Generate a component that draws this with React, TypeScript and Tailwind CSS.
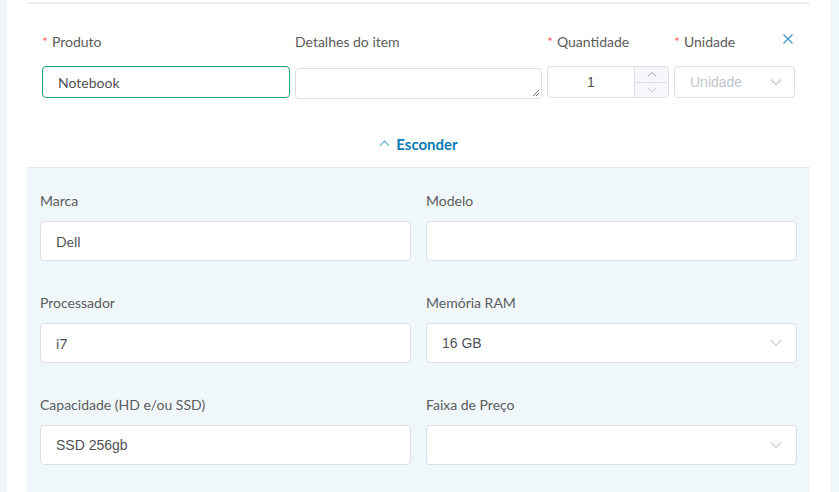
import React from "react";

const Chevron = ({ up = false, className = "" }: { up?: boolean; className?: string }) => (
  <svg width="12" height="8" viewBox="0 0 12 8" className={className} fill="none">
    {up ? (
      <path d="M1 7 L6 2 L11 7" stroke="currentColor" strokeWidth="1.1" />
    ) : (
      <path d="M1 1.5 L6 6.5 L11 1.5" stroke="currentColor" strokeWidth="1.1" />
    )}
  </svg>
);

const Star = () => <span className="text-[#f56c6c] mr-[4px]">*</span>;

const Field = ({
  label,
  value,
  select = false,
  lato = false,
}: {
  label: string;
  value?: string;
  select?: boolean;
  lato?: boolean;
}) => (
  <div className="flex flex-col">
    <div className="h-[20px] leading-[20px] text-[14px] text-[#5b5b5b] font-['Lato',sans-serif]">{label}</div>
    <div className="mt-[10px] h-[40px] rounded-[4px] border border-[#dcdfe6] bg-white flex items-center pl-[15px] pr-[14px]">
      <span
        className={`flex-1 text-[14px] text-[#4f5156] ${
          lato ? "font-['Lato',sans-serif]" : "font-['Liberation_Sans',Arial,sans-serif]"
        }`}
      >
        {value}
      </span>
      {select && <Chevron className="text-[#c8ccd3]" />}
    </div>
  </div>
);

export default function App() {
  return (
    <div className="w-[839px] h-[492px] bg-[#f0f7fb] flex overflow-hidden">
      <div className="ml-[7px] w-[823px] h-full bg-white px-[20px] pt-[2px]">
        <div className="border-t-2 border-[#eef0f4]">
          <div className="px-[15px] pt-[28px]">
            <div className="flex text-[14px] text-[#5b5b5b] font-['Lato',sans-serif] h-[20px] leading-[20px]">
              <div className="w-[253px]">
                <Star />Produto
              </div>
              <div className="w-[252px] pl-0">Detalhes do item</div>
              <div className="w-[127px]">
                <Star />Quantidade
              </div>
              <div className="flex-1 flex justify-between">
                <span>
                  <Star />Unidade
                </span>
                <svg width="12" height="12" viewBox="0 0 12 12" className="mt-[1px] mr-[1px] text-[#3d9ccc]">
                  <path d="M1.5 1.5 L10.5 10.5 M10.5 1.5 L1.5 10.5" stroke="currentColor" strokeWidth="1.3" />
                </svg>
              </div>
            </div>
            <div className="flex mt-[14px] gap-[5px] h-[33px]">
              <div className="w-[248px] h-[32px] rounded-[4px] border border-[#1aa879] flex items-center pl-[15px] text-[14px] text-[#4f5156] font-['Lato',sans-serif]">
                Notebook
              </div>
              <div className="relative w-[247px] h-[31px] mt-[2px] rounded-[4px] border border-[#dcdfe6]">
                <svg width="8" height="8" viewBox="0 0 8 8" className="absolute right-[1px] bottom-[1px]">
                  <path d="M1 7 L7 1 M4 7 L7 4" stroke="#666" strokeWidth="0.9" />
                </svg>
              </div>
              <div className="w-[122px] h-[32px] rounded-[4px] border border-[#dcdfe6] flex overflow-hidden">
                <div className="flex-1 flex items-center justify-center text-[14px] text-[#4f5156] font-['Liberation_Sans',Arial,sans-serif]">
                  1
                </div>
                <div className="w-[34px] bg-[#f5f7fa] border-l border-[#dcdfe6] flex flex-col">
                  <div className="flex-1 flex items-center justify-center border-b border-[#dcdfe6]">
                    <Chevron up className="w-[10px] text-[#909399]" />
                  </div>
                  <div className="flex-1 flex items-center justify-center">
                    <Chevron className="w-[10px] text-[#c0c4cc]" />
                  </div>
                </div>
              </div>
              <div className="w-[121px] h-[32px] rounded-[4px] border border-[#dcdfe6] flex items-center pl-[15px] pr-[12px]">
                <span className="flex-1 text-[14px] text-[#c0c4cc] font-['Liberation_Sans',Arial,sans-serif]">
                  Unidade
                </span>
                <Chevron className="text-[#c0c4cc]" />
              </div>
            </div>
            <div className="flex justify-center items-center gap-[6px] mt-[33px] h-[24px] text-[#0a7db4] font-['Lato',sans-serif] font-bold text-[15px]">
              <Chevron up className="w-[11px] text-[#3d9ccc] mt-[-2px]" />
              <span>Esconder</span>
            </div>
          </div>
          <div className="mt-[11px] border-t border-[#e3ebf1] bg-[#f0f7fb] h-[330px] px-[13px] pt-[23px]">
            <div className="grid grid-cols-2 gap-x-[15px] gap-y-[32px]">
              <Field label="Marca" value="Dell" lato />
              <Field label="Modelo" />
              <Field label="Processador" value="i7" lato />
              <Field label="Memória RAM" value="16 GB" select />
              <Field label="Capacidade (HD e/ou SSD)" value="SSD 256gb" />
              <Field label="Faixa de Preço" select />
            </div>
          </div>
        </div>
      </div>
    </div>
  );
}
